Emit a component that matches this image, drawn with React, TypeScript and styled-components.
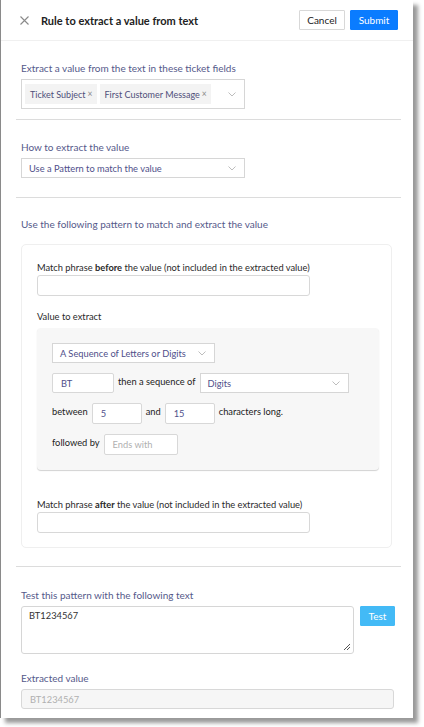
import React from "react";
import styled, { createGlobalStyle } from "styled-components";

const Global = createGlobalStyle`
  html, body { margin: 0; padding: 0; background: #fff; }
  body { font-family: Lato, "Open Sans", sans-serif; }
  * { box-sizing: border-box; }
`;

const Page = styled.div`
  width: 424px;
  height: 727px;
  overflow: hidden;
  background: #fff;
`;

const Panel = styled.div`
  width: 413px;
  height: 718px;
  background: #fff;
  border-left: 1px solid #8a8a8a;
  box-shadow: 5px 5px 4px rgba(0, 0, 0, 0.4);
  display: flex;
  flex-direction: column;
`;

const Header = styled.div`
  height: 41px;
  display: flex;
  align-items: center;
  padding: 0 15px 0 19px;
  border-bottom: 1px solid #f0f0f0;
`;

const Title = styled.div`
  flex: 1;
  margin-left: 12px;
  font-size: 11px;
  font-weight: 700;
  color: #222;
`;

const Button = styled.button<{ $primary?: boolean; $light?: boolean; $w: number }>`
  width: ${(p) => p.$w}px;
  height: 20px;
  margin: 0;
  padding: 0;
  font-family: inherit;
  font-size: 10px;
  border-radius: 1px;
  border: 1px solid ${(p) => (p.$primary ? "#0a7cff" : p.$light ? "#43baf6" : "#d8d8d8")};
  background: ${(p) => (p.$primary ? "#0a7cff" : p.$light ? "#43baf6" : "#fff")};
  color: ${(p) => (p.$primary || p.$light ? "#fff" : "#222")};
`;

const Actions = styled.div`
  display: flex;
  gap: 5px;
`;

const Body = styled.div`
  padding: 0 15px 0 19px;
`;

const Section = styled.div<{ $pad?: string }>`
  padding: ${(p) => p.$pad || "20px 0 0 1px"};
`;

const Divider = styled.div<{ $top: number }>`
  height: 1px;
  background: #dcdcdc;
  margin: ${(p) => p.$top}px -3px 0 -4px;
`;

const Heading = styled.div`
  font-size: 10px;
  color: #55598a;
  line-height: 13px;
  margin-bottom: 4px;
`;

const Label = styled.div`
  font-size: 9.3px;
  color: #2a2a2a;
  line-height: 13px;
  margin-bottom: 1px;
  b { font-weight: 700; }
`;

const SelectBox = styled.div<{ $w: number; $h?: number }>`
  width: ${(p) => p.$w}px;
  height: ${(p) => p.$h || 20}px;
  border: 1px solid #d6d6d6;
  background: #fff;
  display: flex;
  align-items: center;
  padding: 0 8px 0 7px;
  font-size: 9.3px;
  color: #4f4f8a;
  gap: 3px;
`;

const Grow = styled.div`
  flex: 1;
  display: flex;
  gap: 3px;
  align-items: center;
`;

const Tag = styled.span`
  background: #f3f3f3;
  height: 20px;
  display: inline-flex;
  align-items: center;
  padding: 0 4px 0 5px;
  color: #4f4f7a;
  font-size: 9px;
  gap: 2px;
`;

const TagX = styled.span`
  color: #888;
  font-size: 8.5px;
`;

const Chevron = () => (
  <svg width="8" height="5" viewBox="0 0 8 5">
    <path d="M0.5 0.5 L4 4 L7.5 0.5" fill="none" stroke="#b5b5b5" strokeWidth="0.9" />
  </svg>
);

const CloseIcon = () => (
  <svg width="9" height="9" viewBox="0 0 9 9">
    <path d="M0.5 0.5 L8.5 8.5 M8.5 0.5 L0.5 8.5" stroke="#8a8a8a" strokeWidth="1.1" />
  </svg>
);

const Card = styled.div`
  margin: 13px 6px 0 0;
  border: 1px solid #efefef;
  border-radius: 5px;
  padding: 16px 0 14px 15px;
`;

const TextInput = styled.div<{ $w: number; $h?: number; $muted?: boolean; $bg?: string; $r?: number }>`
  width: ${(p) => p.$w}px;
  height: ${(p) => p.$h || 21}px;
  border: 1px solid #d8d8d8;
  border-radius: ${(p) => p.$r ?? 3}px;
  background: ${(p) => p.$bg || "#fff"};
  font-size: 9.3px;
  color: ${(p) => (p.$muted ? "#b0b0b0" : "#4f4f8a")};
  display: flex;
  align-items: center;
  padding: 0 8px;
`;

const InnerBox = styled.div`
  width: 342px;
  margin-top: 5px;
  background: #f7f7f7;
  border-radius: 4px;
  box-shadow: 0 1px 1px rgba(0, 0, 0, 0.18);
  padding: 15px 0 15px 15px;
  display: flex;
  flex-direction: column;
  gap: 10px;
`;

const Row = styled.div`
  display: flex;
  align-items: center;
  gap: 4px;
  font-size: 9.3px;
  color: #222;
`;

const RowText = styled.span`
  position: relative;
  top: -2px;
`;

const TestRow = styled.div`
  display: flex;
  align-items: flex-start;
  gap: 6px;
`;

const TextArea = styled.div`
  position: relative;
  width: 333px;
  height: 48px;
  border: 1px solid #d6d6d6;
  border-radius: 3px;
  padding: 3px 7px;
  font-size: 9.3px;
  color: #333;
`;

const Grip = styled.svg`
  position: absolute;
  right: 2px;
  bottom: 2px;
`;

export default function App() {
  return (
    <Page>
      <Global />
      <Panel>
        <Header>
          <CloseIcon />
          <Title>Rule to extract a value from text</Title>
          <Actions>
            <Button $w={46}>Cancel</Button>
            <Button $w={48} $primary>Submit</Button>
          </Actions>
        </Header>
        <Body>
          <Section $pad="21px 0 0 1px">
            <Heading>Extract a value from the text in these ticket fields</Heading>
            <SelectBox $w={224} $h={30} style={{ paddingLeft: 3 }}>
              <Grow>
                <Tag>
                  Ticket Subject <TagX>×</TagX>
                </Tag>
                <Tag>
                  First Customer Message <TagX>×</TagX>
                </Tag>
              </Grow>
              <Chevron />
            </SelectBox>
          </Section>
          <Divider $top={10} />
          <Section $pad="21px 0 0 1px">
            <Heading>How to extract the value</Heading>
            <SelectBox $w={224}>
              <Grow>Use a Pattern to match the value</Grow>
              <Chevron />
            </SelectBox>
          </Section>
          <Divider $top={19} />
          <Section $pad="20px 0 0 1px">
            <Heading>Use the following pattern to match and extract the value</Heading>
            <Card>
              <Label>
                Match phrase <b>before</b> the value (not included in the extracted value)
              </Label>
              <TextInput $w={273} />
              <Label style={{ marginTop: 14 }}>Value to extract</Label>
              <InnerBox>
                <SelectBox $w={163}>
                  <Grow>A Sequence of Letters or Digits</Grow>
                  <Chevron />
                </SelectBox>
                <Row>
                  <TextInput $w={62} $h={20} $r={2}>BT</TextInput>
                  <RowText>then a sequence of</RowText>
                  <SelectBox $w={149}>
                    <Grow>Digits</Grow>
                    <Chevron />
                  </SelectBox>
                </Row>
                <Row>
                  <RowText>between</RowText>
                  <TextInput $w={50} $r={2}>5</TextInput>
                  <RowText>and</RowText>
                  <TextInput $w={50} $r={2}>15</TextInput>
                  <RowText>characters long.</RowText>
                </Row>
                <Row>
                  <RowText>followed by</RowText>
                  <TextInput $w={74} $muted $r={2}>Ends with</TextInput>
                </Row>
              </InnerBox>
              <Label style={{ marginTop: 28 }}>
                Match phrase <b>after</b> the value (not included in the extracted value)
              </Label>
              <TextInput $w={273} />
            </Card>
          </Section>
          <Divider $top={18} />
          <Section $pad="22px 0 0 1px">
            <Heading>Test this pattern with the following text</Heading>
            <TestRow>
              <TextArea>
                BT1234567
                <Grip width="8" height="8" viewBox="0 0 8 8">
                  <path d="M7 1 L1 7 M7 4 L4 7" stroke="#555" strokeWidth="1" />
                </Grip>
              </TextArea>
              <Button $w={35} $light>Test</Button>
            </TestRow>
          </Section>
          <Section $pad="18px 0 0 1px">
            <Heading>Extracted value</Heading>
            <TextInput $w={373} $h={20} $muted $bg="#f6f6f6">BT1234567</TextInput>
          </Section>
        </Body>
      </Panel>
    </Page>
  );
}
